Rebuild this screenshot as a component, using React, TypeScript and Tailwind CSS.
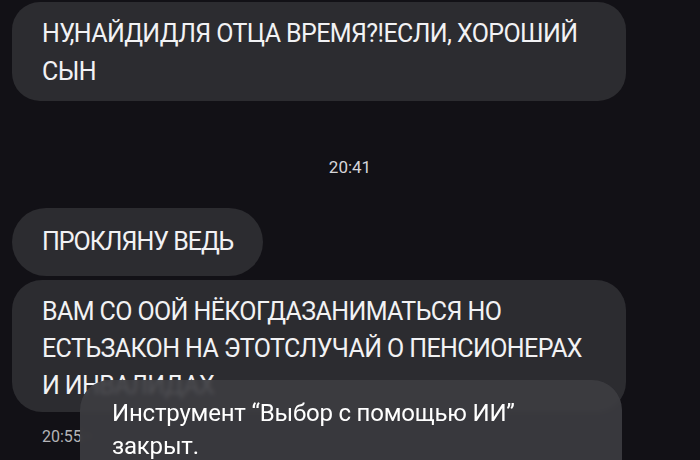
export default function App() {
  return (
    <div className="relative w-[700px] h-[460px] overflow-hidden bg-[#121116] font-['Roboto',sans-serif] text-[#f2f2f4]">
      {/* Chat */}
      <div className="flex flex-col items-start pl-3 pt-[2px]">
        <div className="w-[614px] rounded-[28px] bg-[#2c2c30] pl-[30px] pr-4 pt-[13px] pb-[10px] text-[25px] leading-[38px] tracking-[-0.6px]">
          <div className="whitespace-nowrap">НУ,НАЙДИДЛЯ ОТЦА ВРЕМЯ?!ЕСЛИ, ХОРОШИЙ</div>
          <div>СЫН</div>
        </div>

        <div className="self-stretch pr-3 mt-[56px] text-center text-[17px] leading-[20px] text-[#d6d6da]">20:41</div>

        <div className="mt-[31px] rounded-full bg-[#2c2c30] pl-[30px] pr-[30px] pt-[15px] pb-[15px] text-[25px] leading-[38px] tracking-[-1px] whitespace-nowrap">
          ПРОКЛЯНУ ВЕДЬ
        </div>

        <div className="mt-[4px] w-[614px] rounded-[30px] bg-[#2c2c30] pl-[30px] pr-4 pt-[13px] pb-[8px] text-[25px] leading-[37px] tracking-[-0.6px]">
          <div className="whitespace-nowrap">ВАМ СО ООЙ НЁКОГДАЗАНИМАТЬСЯ НО</div>
          <div className="whitespace-nowrap">ЕСТЬЗАКОН НА ЭТОТСЛУЧАЙ О ПЕНСИОНЕРАХ</div>
          <div>И ИНВАЛИДАХ</div>
        </div>

        <div className="mt-[15px] pl-[30px] text-[16px] leading-[20px] text-[#b4b4b8]">20:55 · </div>
      </div>

      {/* Toast */}
      <div className="absolute left-[80px] top-[380px] w-[542px] h-[110px] rounded-[30px] bg-[#3d3d41]/90 backdrop-blur-[2px] pl-8 pt-[17px] text-[24px] leading-[33px] tracking-[-0.2px] text-white">
        <div>Инструмент “Выбор с помощью ИИ”</div>
        <div>закрыт.</div>
      </div>
    </div>
  )
}
